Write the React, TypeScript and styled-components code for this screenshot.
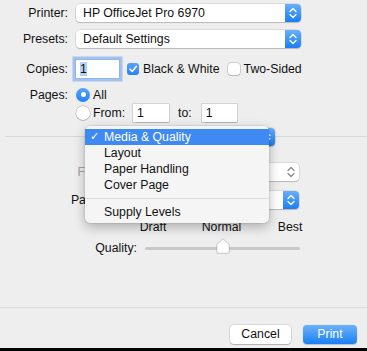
import styled, { createGlobalStyle } from 'styled-components';

const GlobalStyle = createGlobalStyle`
  html, body {
    margin: 0;
    padding: 0;
    background: #eeeeee;
  }
  body {
    font-family: "Liberation Sans", Arial, "DejaVu Sans", sans-serif;
    font-size: 12.3px;
    color: #111111;
  }
`;

const Dialog = styled.div`
  width: 367px;
  height: 351px;
  display: flex;
  flex-direction: column;
  background: #eeeeee;
  overflow: hidden;
`;

const TopForm = styled.div`
  display: grid;
  grid-template-columns: 68px 1fr;
  grid-template-rows: 25px 27px 34px 17px 19px;
  column-gap: 8px;
  align-items: center;
  padding-bottom: 6px;
`;

const Label = styled.div<{ $muted?: boolean }>`
  justify-self: end;
  white-space: nowrap;
  color: ${(p) => (p.$muted ? '#a3a3a3' : '#111111')};
`;

const Controls = styled.div<{ $col?: number }>`
  grid-column: ${(p) => p.$col ?? 'auto'};
  display: flex;
  align-items: center;
  white-space: nowrap;
`;

const Popup = styled.div<{ $width: number; $disabled?: boolean }>`
  display: flex;
  align-items: center;
  width: ${(p) => p.$width}px;
  height: 18px;
  padding-left: 7px;
  box-sizing: border-box;
  background: #ffffff;
  border-radius: 4px;
  box-shadow: 0 0 0 0.5px rgba(0, 0, 0, 0.16), 0 1px 1px rgba(0, 0, 0, 0.16);
  color: ${(p) => (p.$disabled ? '#a3a3a3' : '#111111')};
`;

const Stepper = styled.div<{ $disabled?: boolean }>`
  margin-left: auto;
  width: 16px;
  height: 18px;
  border-radius: 0 4px 4px 0;
  display: flex;
  align-items: center;
  justify-content: center;
  background: ${(p) => (p.$disabled ? 'transparent' : 'linear-gradient(#6aaefa, #1a7ef5)')};
`;

const Field = styled.div<{ $width: number; $focused?: boolean }>`
  width: ${(p) => p.$width}px;
  height: 18px;
  line-height: 18px;
  padding-left: 4px;
  box-sizing: border-box;
  background: #ffffff;
  box-shadow: ${(p) =>
    p.$focused
      ? '0 0 0 1px #8db8ef, 0 0 0 3.5px rgba(104, 158, 232, 0.55)'
      : '0 0 0 0.5px rgba(0, 0, 0, 0.22), 0 0.5px 1px rgba(0, 0, 0, 0.15)'};
`;

const Selected = styled.span`
  background: #b3d2f8;
`;

const Box = styled.div<{ $checked?: boolean }>`
  width: 12px;
  height: 12px;
  border-radius: 3px;
  display: flex;
  align-items: center;
  justify-content: center;
  background: ${(p) => (p.$checked ? 'linear-gradient(#5aa2f8, #2482f5)' : '#ffffff')};
  box-shadow: ${(p) =>
    p.$checked ? 'none' : '0 0 0 0.5px rgba(0, 0, 0, 0.25), 0 1px 1px rgba(0, 0, 0, 0.12)'};
`;

const Radio = styled.div<{ $checked?: boolean }>`
  width: 14px;
  height: 14px;
  border-radius: 50%;
  display: flex;
  align-items: center;
  justify-content: center;
  background: ${(p) => (p.$checked ? 'linear-gradient(#5aa2f8, #2482f5)' : '#ffffff')};
  box-shadow: ${(p) =>
    p.$checked ? 'none' : '0 0 0 0.5px rgba(0, 0, 0, 0.28), 0 1px 1px rgba(0, 0, 0, 0.12)'};

  &::after {
    content: '';
    display: ${(p) => (p.$checked ? 'block' : 'none')};
    width: 5px;
    height: 5px;
    border-radius: 50%;
    background: #ffffff;
  }
`;

const Text = styled.span<{ $left?: number }>`
  margin-left: ${(p) => p.$left ?? 0}px;
`;

const DividerRow = styled.div`
  position: relative;
  height: 18px;
  display: flex;
  justify-content: center;

  &::before {
    content: '';
    position: absolute;
    left: 5px;
    right: 0;
    top: 8px;
    height: 1px;
    background: #d7d7d7;
  }
`;

const PanelPopup = styled(Popup)`
  position: relative;
`;

const Menu = styled.div`
  position: absolute;
  left: 85px;
  top: -2px;
  width: 184px;
  padding: 3px 0 3px;
  background: #f5f5f5;
  border-radius: 5px;
  box-shadow: 0 0 0 0.5px rgba(0, 0, 0, 0.12), 0 4px 12px rgba(0, 0, 0, 0.28);
  z-index: 5;
`;

const MenuItem = styled.div<{ $active?: boolean }>`
  position: relative;
  height: 16px;
  line-height: 16px;
  padding-left: 19px;
  background: ${(p) => (p.$active ? '#3f89f3' : 'transparent')};
  color: ${(p) => (p.$active ? '#ffffff' : '#111111')};
  white-space: nowrap;
`;

const Check = styled.span`
  position: absolute;
  left: 5px;
  font-family: "DejaVu Sans", sans-serif;
  font-size: 11px;
`;

const MenuSeparator = styled.div`
  height: 11px;
  display: flex;
  align-items: center;

  &::after {
    content: '';
    flex: 1;
    height: 1px;
    background: #dcdcdc;
  }
`;

const PanelBody = styled.div`
  display: flex;
  flex-direction: column;
  padding: 17px 67px 0 0;
`;

const PanelRow = styled.div<{ $top?: number; $height?: number }>`
  display: grid;
  grid-template-columns: 137px 1fr;
  column-gap: 8px;
  align-items: center;
  margin-top: ${(p) => p.$top ?? 0}px;
  height: ${(p) => (p.$height ? `${p.$height}px` : 'auto')};
`;

const Scale = styled.div`
  grid-column: 2;
  display: flex;
  flex-direction: column;
`;

const ScaleLine = styled.div<{ $height: number; $pad: string }>`
  display: flex;
  justify-content: space-between;
  height: ${(p) => p.$height}px;
  line-height: ${(p) => p.$height}px;
  padding: ${(p) => p.$pad};
`;

const Mark = styled.div`
  width: 0;
  display: flex;
  justify-content: center;
  white-space: nowrap;
`;

const Tick = styled.div`
  width: 1px;
  height: 4px;
  margin-top: 1px;
  background: #8e8e8e;
`;

const Slider = styled.div`
  position: relative;
  height: 15px;
  display: flex;
  align-items: center;
`;

const Rail = styled.div`
  flex: 1;
  height: 3px;
  margin-top: 2px;
  border-radius: 2px;
  background: #c8c8c8;
`;

const Thumb = styled.svg`
  position: absolute;
  left: 50%;
  top: -2px;
  transform: translateX(-50%);
`;

const Spacer = styled.div`
  flex: 1;
`;

const Separator = styled.div`
  height: 1px;
  background: #dcdcdc;
`;

const Footer = styled.div`
  display: flex;
  justify-content: flex-end;
  gap: 12px;
  padding: 17px 10px 4px 0;
`;

const Button = styled.div<{ $primary?: boolean; $width: number }>`
  width: ${(p) => p.$width}px;
  height: 19px;
  line-height: 19px;
  text-align: center;
  border-radius: 4px;
  color: ${(p) => (p.$primary ? '#ffffff' : '#111111')};
  background: ${(p) => (p.$primary ? 'linear-gradient(#6cb1fa, #1a80f5)' : '#ffffff')};
  box-shadow: ${(p) =>
    p.$primary ? '0 0.5px 1px rgba(0, 0, 0, 0.2)' : '0 0 0 0.5px rgba(0, 0, 0, 0.18), 0 1px 1px rgba(0, 0, 0, 0.18)'};
`;

const BottomBar = styled.div`
  height: 3px;
  background: #000000;
`;

function Chevrons({ color }: { color: string }) {
  return (
    <svg width="10" height="14" viewBox="0 0 10 14">
      <path d="M2 5.5 L5 2.5 L8 5.5 M2 8.5 L5 11.5 L8 8.5" fill="none" stroke={color} strokeWidth="1.3" strokeLinecap="round" strokeLinejoin="round" />
    </svg>
  );
}

function PopupButton({ text, width, disabled }: { text?: string; width: number; disabled?: boolean }) {
  return (
    <Popup $width={width} $disabled={disabled}>
      {text}
      <Stepper $disabled={disabled}>
        <Chevrons color={disabled ? '#8a8a8a' : '#ffffff'} />
      </Stepper>
    </Popup>
  );
}

export default function App() {
  const menuItems = ['Layout', 'Paper Handling', 'Cover Page'];

  return (
    <Dialog>
      <GlobalStyle />
      <TopForm>
        <Label>Printer:</Label>
        <Controls>
          <PopupButton text="HP OfficeJet Pro 6970" width={225} />
        </Controls>

        <Label>Presets:</Label>
        <Controls>
          <PopupButton text="Default Settings" width={225} />
        </Controls>

        <Label>Copies:</Label>
        <Controls>
          <Field $width={43} $focused>
            <Selected>1</Selected>
          </Field>
          <Box $checked style={{ marginLeft: 8 }}>
            <svg width="10" height="10" viewBox="0 0 10 10">
              <path d="M2 5.2 L4.2 7.4 L8.2 2.4" fill="none" stroke="#fff" strokeWidth="1.6" strokeLinecap="round" strokeLinejoin="round" />
            </svg>
          </Box>
          <Text $left={4}>Black &amp; White</Text>
          <Box style={{ marginLeft: 8 }} />
          <Text $left={4}>Two-Sided</Text>
        </Controls>

        <Label>Pages:</Label>
        <Controls>
          <Radio $checked />
          <Text $left={3}>All</Text>
        </Controls>

        <Controls $col={2}>
          <Radio />
          <Text $left={3}>From:</Text>
          <Field $width={36} style={{ marginLeft: 8 }}>1</Field>
          <Text $left={9}>to:</Text>
          <Field $width={35} style={{ marginLeft: 10 }}>1</Field>
        </Controls>
      </TopForm>

      <DividerRow>
        <PanelPopup $width={183}>
          <Stepper>
            <Chevrons color="#ffffff" />
          </Stepper>
        </PanelPopup>
        <Menu>
          <MenuItem $active>
            <Check>✓</Check>
            Media &amp; Quality
          </MenuItem>
          {menuItems.map((item) => (
            <MenuItem key={item}>{item}</MenuItem>
          ))}
          <MenuSeparator />
          <MenuItem>Supply Levels</MenuItem>
        </Menu>
      </DividerRow>

      <PanelBody>
        <PanelRow>
          <Label $muted>Feed from:</Label>
          <PopupButton width={154} disabled />
        </PanelRow>
        <PanelRow $top={10}>
          <Label>Paper Type:</Label>
          <PopupButton width={154} />
        </PanelRow>
        <PanelRow $top={11}>
          <Scale>
            <ScaleLine $height={14} $pad="0 10px 0 8px">
              <Mark>Draft</Mark>
              <Mark>Normal</Mark>
              <Mark>Best</Mark>
            </ScaleLine>
            <ScaleLine $height={5} $pad="0 6px">
              <Mark><Tick /></Mark>
              <Mark><Tick /></Mark>
              <Mark><Tick /></Mark>
            </ScaleLine>
          </Scale>
        </PanelRow>
        <PanelRow $top={1} $height={15}>
          <Label>Quality:</Label>
          <Slider>
            <Rail />
            <Thumb width="14" height="16" viewBox="0 0 14 16">
              <path d="M7 0.8 L13.2 6.6 V14 Q13.2 15.2 12 15.2 H2 Q0.8 15.2 0.8 14 V6.6 Z" fill="#ffffff" stroke="rgba(0,0,0,0.25)" strokeWidth="0.8" />
            </Thumb>
          </Slider>
        </PanelRow>
      </PanelBody>

      <Spacer />
      <Separator />
      <Footer>
        <Button $width={61}>Cancel</Button>
        <Button $width={54} $primary>Print</Button>
      </Footer>
      <BottomBar />
    </Dialog>
  );
}
